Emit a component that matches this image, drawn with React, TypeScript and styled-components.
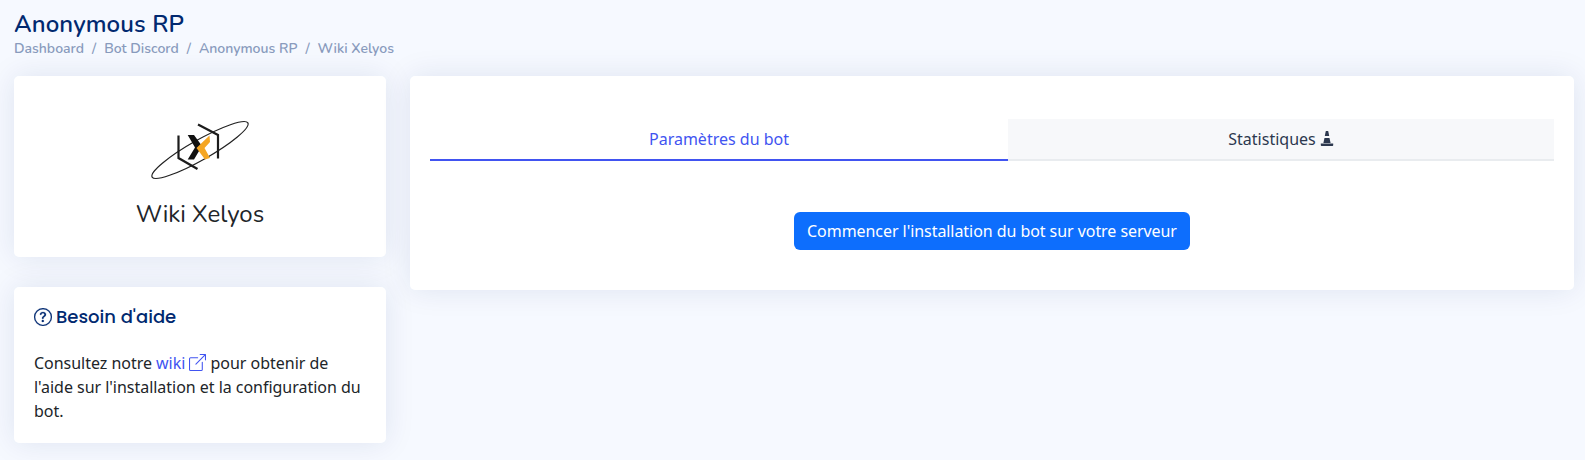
import React from "react";
import styled, { createGlobalStyle } from "styled-components";

const Global = createGlobalStyle`
  html, body { margin: 0; padding: 0; background: #f6f9ff; }
  * { box-sizing: border-box; }
  body { font-family: "Noto Sans", sans-serif; color: #212529; }
`;

const Page = styled.div`
  width: 1585px;
  height: 460px;
  overflow: hidden;
  padding: 9px 11px 0 14px;
  background: #f6f9ff;
`;
const Header = styled.header`
  height: 67px;
`;
const Title = styled.h1`
  margin: 0;
  font: 600 24px/30px "Nunito", "Lato", sans-serif;
  letter-spacing: 0.1px;
  color: #012970;
`;
const Crumbs = styled.nav`
  display: flex;
  gap: 8px;
  font: 600 14px/20px "Nunito", "Lato", sans-serif;
  color: #899bbd;
`;
const Grid = styled.div`
  display: grid;
  grid-template-columns: 372px 1fr;
  gap: 24px;
  align-items: start;
`;
const Side = styled.div`
  display: flex;
  flex-direction: column;
  gap: 30px;
`;
const Card = styled.section`
  background: #fff;
  border-radius: 5px;
  box-shadow: 0 0 30px rgba(1, 41, 112, 0.1);
`;
const ProfileCard = styled(Card)`
  height: 181px;
  display: flex;
  flex-direction: column;
  align-items: center;
  padding-top: 39px;
`;
const BotName = styled.h2`
  margin: 13px 0 0;
  font: 400 24px/33px "Nunito", "Lato", sans-serif;
  color: #212529;
`;
const HelpCard = styled(Card)`
  height: 156px;
  padding: 20px;
`;
const HelpTitle = styled.h3`
  margin: 0;
  display: flex;
  align-items: center;
  gap: 4px;
  font: 500 18px/20px "Poppins", "Inter", sans-serif;
  color: #012970;
`;
const HelpText = styled.p`
  margin: 24px 0 0;
  font-size: 16px;
  line-height: 24px;
  letter-spacing: -0.03px;
`;
const WikiLink = styled.a`
  color: #4154f1;
  text-decoration: none;
`;
const ExternalMark = styled.svg`
  vertical-align: -2px;
`;
const MainCard = styled(Card)`
  height: 214px;
  padding: 43px 20px 0;
`;
const Tabs = styled.div`
  display: grid;
  grid-template-columns: 578px 1fr;
`;
const Tab = styled.button<{ $active?: boolean }>`
  height: 42px;
  border: 0;
  padding: 0;
  display: flex;
  align-items: center;
  justify-content: center;
  gap: 4px;
  font: 400 16px/24px "Noto Sans", sans-serif;
  color: ${(p) => (p.$active ? "#4154f1" : "#2c384e")};
  background: ${(p) => (p.$active ? "#fff" : "#f7f8fa")};
  border-bottom: 2px solid ${(p) => (p.$active ? "#4154f1" : "#e9ecef")};
`;
const Action = styled.div`
  display: flex;
  justify-content: center;
  margin-top: 51px;
`;
const PrimaryButton = styled.button`
  height: 38px;
  width: 396px;
  padding: 0;
  border: 0;
  border-radius: 6px;
  background: #0d6efd;
  color: #fff;
  letter-spacing: -0.06px;
  font: 400 16px/24px "Noto Sans", sans-serif;
`;

const Logo = () => (
  <svg width="110" height="70" viewBox="0 0 110 70" fill="none">
    <ellipse cx="55" cy="35" rx="55" ry="10" transform="rotate(-29.5 55 35)" stroke="#222" strokeWidth="1.2" />
    <path d="M33.5 20.5v22.5l19 11" stroke="#1c1c1c" strokeWidth="2.2" />
    <path d="M53 9.5l20 10.5v23.5" stroke="#1c1c1c" strokeWidth="2.2" />
    <path d="M42.7 20H49l8 11-8 13.5h-6.3L50 32.5z" fill="#111" />
    <path d="M51.5 33l13-12.5.5 6.500L59.500 33 65 43l-5 1.500z" fill="#f5a623" />
  </svg>
);
const Help = () => (
  <svg width="18" height="18" viewBox="0 0 16 16" fill="#012970" stroke="#012970" strokeWidth="0.2">
    <path d="M8 15A7 7 0 1 1 8 1a7 7 0 0 1 0 14m0 1A8 8 0 1 0 8 0a8 8 0 0 0 0 16" />
    <path d="M5.255 5.786a.237.237 0 0 0 .241.247h.825c.138 0 .248-.113.266-.25.09-.656.54-1.134 1.342-1.134.686 0 1.314.343 1.314 1.168 0 .635-.374.927-.965 1.371-.673.489-1.206 1.06-1.168 1.987l.003.217a.25.25 0 0 0 .25.246h.811a.25.25 0 0 0 .25-.25v-.105c0-.718.273-.927 1.01-1.486.609-.463 1.244-.977 1.244-2.056 0-1.511-1.276-2.241-2.673-2.241-1.267 0-2.655.59-2.75 2.286m1.557 5.763c0 .533.425.927 1.01.927.609 0 1.028-.394 1.028-.927 0-.552-.42-.94-1.029-.94-.584 0-1.009.388-1.009.94" />
  </svg>
);
const External = () => (
  <ExternalMark width="17" height="17" viewBox="0 0 16 16" fill="#4154f1">
    <path fillRule="evenodd" d="M8.636 3.5a.5.5 0 0 0-.5-.5H1.5A1.5 1.5 0 0 0 0 4.5v10A1.5 1.5 0 0 0 1.5 16h10a1.5 1.5 0 0 0 1.5-1.5V7.864a.5.5 0 0 0-1 0V14.5a.5.5 0 0 1-.5.5h-10a.5.5 0 0 1-.5-.5v-10a.5.5 0 0 1 .5-.5h6.636a.5.5 0 0 0 .5-.5" />
    <path fillRule="evenodd" d="M16 .5a.5.5 0 0 0-.5-.5h-5a.5.5 0 0 0 0 1h3.793L6.146 9.146a.5.5 0 1 0 .708.708L15 1.707V5.5a.5.5 0 0 0 1 0z" />
  </ExternalMark>
);
const Cone = () => (
  <svg width="14" height="16" viewBox="0 0 14 16" fill="#2c384e">
    <path d="M5.8 0h2.4l1 5H4.800z" />
    <path d="M4.500 7h5l1.100 5H3.400z" />
    <path d="M.8 12.500h12.400v1.500c0 .6-.4 1-1 1H1.800c-.6 0-1-.4-1-1z" />
  </svg>
);

export default function App() {
  return (
    <Page>
      <Global />
      <Header>
        <Title>Anonymous RP</Title>
        <Crumbs>
          <span>Dashboard</span><span>/</span>
          <span>Bot Discord</span><span>/</span>
          <span>Anonymous RP</span><span>/</span>
          <span>Wiki Xelyos</span>
        </Crumbs>
      </Header>
      <Grid>
        <Side>
          <ProfileCard>
            <Logo />
            <BotName>Wiki Xelyos</BotName>
          </ProfileCard>
          <HelpCard>
            <HelpTitle><Help /> Besoin d'aide</HelpTitle>
            <HelpText>
              Consultez notre <WikiLink>wiki <External /></WikiLink> pour obtenir de l'aide sur l'installation et la configuration du bot.
            </HelpText>
          </HelpCard>
        </Side>
        <MainCard>
          <Tabs>
            <Tab $active>Paramètres du bot</Tab>
            <Tab>Statistiques <Cone /></Tab>
          </Tabs>
          <Action>
            <PrimaryButton>Commencer l'installation du bot sur votre serveur</PrimaryButton>
          </Action>
        </MainCard>
      </Grid>
    </Page>
  );
}
